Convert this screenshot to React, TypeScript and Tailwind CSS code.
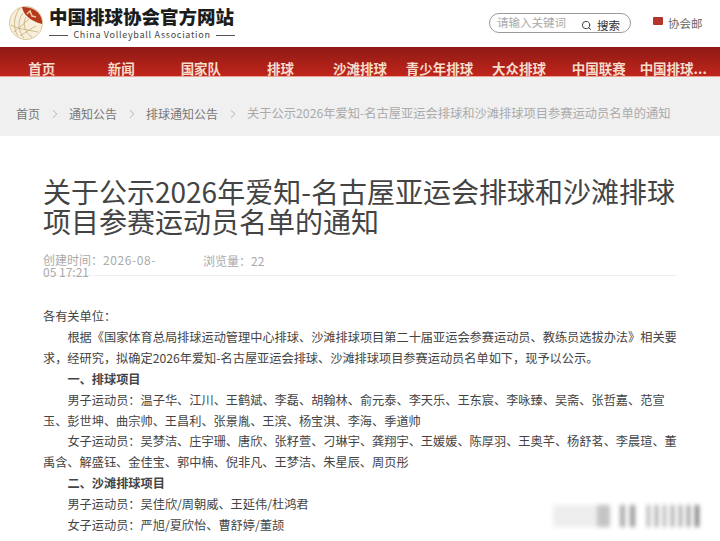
import { ChevronRight, Search } from "lucide-react";

const navItems = ["首页", "新闻", "国家队", "排球", "沙滩排球", "青少年排球", "大众排球", "中国联赛"];
const crumbs = ["首页", "通知公告", "排球通知公告"];
const cjk = { fontFamily: '"Noto Sans CJK SC", "Noto Sans", sans-serif' };
// full-width punctuation
const COLON = "\uFF1A";
const COMMA = "\uFF0C";

function Logo() {
  return (
    <svg width="36" height="36" viewBox="0 0 36 36" className="shrink-0">
      <circle cx="18" cy="18" r="16.5" fill="#f7efdc" stroke="#d9c99a" strokeWidth="1" />
      <path d="M14 2 C15 9 22 16 34 19 C35 10 27 1 14 2 Z" fill="#b5371c" />
      <path d="M19 9 L22 6 L24 11 L28 12" fill="none" stroke="#eec79a" strokeWidth="1.6" />
      <g fill="none" stroke="#c8b47e" strokeWidth="0.9">
        <path d="M12 3 C5 12 5 24 10 31" />
        <path d="M15 8 C9 16 10 26 16 33" />
        <path d="M18 12 C14 19 17 28 24 32" />
        <path d="M3 20 C10 24 21 25 30 27" />
        <path d="M6 27 C13 21 18 17 21 14" />
        <path d="M12 31 C18 27 24 23 28 21" />
      </g>
    </svg>
  );
}

export default function App() {
  return (
    <div className="relative h-[541px] w-[720px] overflow-hidden bg-white" style={cjk}>
      {/* top bar */}
      <div className="flex h-[47px] items-start">
        <div className="ml-[8px] mt-[5px]">
          <Logo />
        </div>
        <div className="ml-[5px] mt-[5px] w-[186px]">
          <div className="text-[18.5px] leading-[23px] font-black whitespace-nowrap text-[#1c1c1c]">中国排球协会官方网站</div>
          <div className="mt-[1px] flex items-center justify-between">
            <span className="h-px w-[19px] bg-[#555]"></span>
            <span className="text-[9px] leading-[12px] tracking-[0.7px] whitespace-nowrap text-[#444]">China Volleyball Association</span>
            <span className="h-px w-[19px] bg-[#555]"></span>
          </div>
        </div>
        <div className="mt-[13px] ml-[254px] flex h-[20px] w-[142px] items-center overflow-hidden rounded-full border border-[#999] pl-[7px]">
          <span className="w-[71px] shrink-0 overflow-hidden text-[11.5px] whitespace-nowrap text-[#aaa]">请输入关键词</span>
          <Search size={11} className="mt-[5px] ml-[13px] shrink-0 text-[#333]" />
          <span className="mt-[5px] ml-[5px] text-[11.5px] whitespace-nowrap text-[#333]">搜索</span>
        </div>
        <div className="mt-[13px] ml-[22px] flex items-start">
          <span className="mt-[4px] h-[8px] w-[10px] rounded-[1px] bg-[#b5352a]"></span>
          <span className="mt-[2px] ml-[5px] text-[11.5px] leading-[16px] whitespace-nowrap text-[#666]">协会邮</span>
        </div>
      </div>

      {/* nav */}
      <nav className="grid h-[30px] grid-cols-9 items-end border-b border-[#e9a090] bg-gradient-to-b from-[#8f1a14] to-[#c0251c] pl-[2px] pr-[2px]">
        {navItems.map((item) => (
          <span key={item} className="text-center text-[13.5px] leading-[16px] font-bold whitespace-nowrap text-[#f6dccb]">
            {item}
          </span>
        ))}
        <span className="pr-[10px] text-center text-[13.5px] leading-[16px] font-bold whitespace-nowrap text-[#f6dccb]">中国排球...</span>
      </nav>

      {/* breadcrumb */}
      <div className="flex h-[59px] items-center bg-[#f0f0f0] pt-[14px] pl-[16px] text-[12px] whitespace-nowrap text-[#777]">
        {crumbs.map((c) => (
          <div key={c} className="flex items-center">
            <span>{c}</span>
            <ChevronRight size={14} strokeWidth={1} className="mx-[7.5px] text-[#888]" />
          </div>
        ))}
        <span className="text-[12.25px] text-[#aaa]">关于公示2026年爱知-名古屋亚运会排球和沙滩排球项目参赛运动员名单的通知</span>
      </div>

      {/* article */}
      <div className="px-[43px] pt-[40px]">
        <h1 className="text-[28px] leading-[30px] font-normal text-[#444]">
          关于公示2026年爱知-名古屋亚运会排球和沙滩排球项目参赛运动员名单的通知
        </h1>
        <div className="mt-[18px] flex h-[22px] border-b border-[#eee] text-[12px] leading-[12px] text-[#aaa]">
          <span className="w-[118px] whitespace-nowrap">
            {`创建时间${COLON}`}
            <span className="tracking-[0.6px]">2026-08-</span>
            <br />
            05 17:21
          </span>
          <span className="ml-[42px] mt-[1px]">{`浏览量${COLON}22`}</span>
        </div>
        <div className="mt-[30px] text-[12.2px] leading-[20.9px] text-[#444]">
          <p>{`各有关单位${COLON}`}</p>
          <p className="indent-[24.4px]">
            {`根据《国家体育总局排球运动管理中心排球、沙滩排球项目第二十届亚运会参赛运动员、教练员选拔办法》相关要求${COMMA}经研究${COMMA}拟确定2026年爱知-名古屋亚运会排球、沙滩排球项目参赛运动员名单如下${COMMA}现予以公示。`}
          </p>
          <p className="indent-[24.4px] font-bold">一、排球项目</p>
          <p className="indent-[24.4px]">
            {`男子运动员${COLON}温子华、江川、王鹤斌、李磊、胡翰林、俞元泰、李天乐、王东宸、李咏臻、吴斋、张哲嘉、范宣玉、彭世坤、曲宗帅、王昌利、张景胤、王滨、杨宝淇、李海、季道帅`}
          </p>
          <p className="indent-[24.4px]">
            {`女子运动员${COLON}吴梦洁、庄宇珊、唐欣、张籽萱、刁琳宇、龚翔宇、王媛媛、陈厚羽、王奥芊、杨舒茗、李晨瑄、董禹含、解盛钰、金佳宝、郭中楠、倪非凡、王梦洁、朱星辰、周页彤`}
          </p>
          <p className="indent-[24.4px] font-bold">二、沙滩排球项目</p>
          <p className="indent-[24.4px]">{`男子运动员${COLON}吴佳欣/周朝威、王延伟/杜鸿君`}</p>
          <p className="indent-[24.4px]">{`女子运动员${COLON}严旭/夏欣怡、曹舒婷/董颉`}</p>
        </div>
      </div>

      {/* blurred watermark */}
      <div className="absolute top-[505px] left-[553px] flex h-[22px] items-stretch blur-[2px]">
        <span className="w-[44px] bg-[#eeeeee]"></span>
        <span className="w-[13px] bg-[#c4c4c4]"></span>
        <span className="ml-[10px] w-[5px] bg-[#a8a8a8]"></span>
        <span className="ml-[5px] w-[5px] bg-[#999]"></span>
        <span className="ml-[12px] w-[3px] bg-[#aaa]"></span>
        <span className="ml-[5px] w-[3px] bg-[#999]"></span>
        <span className="ml-[5px] w-[3px] bg-[#aaa]"></span>
        <span className="ml-[5px] w-[3px] bg-[#999]"></span>
        <span className="ml-[5px] w-[3px] bg-[#999]"></span>
        <span className="ml-[5px] w-[3px] bg-[#888]"></span>
        <span className="ml-[5px] w-[4px] bg-[#777]"></span>
      </div>
    </div>
  );
}
